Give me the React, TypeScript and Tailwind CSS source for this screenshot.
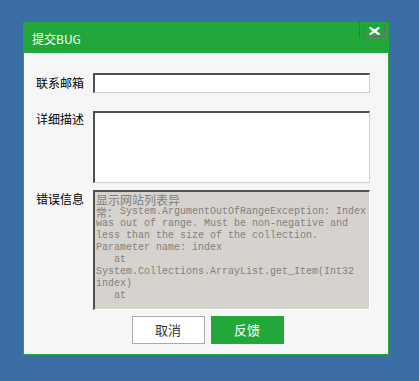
import React from "react";

const cjk = { fontFamily: '"Noto Sans CJK SC", "SimSun", sans-serif' };
const mono = { fontFamily: '"Liberation Mono", "Noto Sans CJK SC", monospace' };

export default function App() {
  const lines: string[] = [
    "System.ArgumentOutOfRangeException: Index",
    "was out of range. Must be non-negative and",
    "less than the size of the collection.",
    "Parameter name: index",
    "   at",
    "System.Collections.ArrayList.get_Item(Int32",
    "index)",
    "   at",
  ];
  return (
    <div className="w-[419px] h-[381px] bg-[#3a6ea5] pt-[22px] pl-[23px] overflow-hidden">
      <div className="w-[366px] h-[333px] flex flex-col">
        {/* Title bar */}
        <div className="h-[31px] bg-[#22a73b] flex items-start shrink-0">
          <div
            className="text-white text-[12px] leading-[14px] pl-[9px] pt-[10px] flex-1"
            style={cjk}
          >
            提交BUG
          </div>
          <div className="w-px h-[16px] bg-[#1b8d31] mr-[3px]" />
          <div className="mt-[3px] mr-[4px] w-[22px] h-[12px] border border-[#6b6b6b] flex items-center justify-center">
            <svg width="11" height="8" viewBox="0 0 11 8">
              <path
                d="M1.5 1 L9.5 7 M9.5 1 L1.5 7"
                stroke="#ffffff"
                strokeWidth="2.2"
                strokeLinecap="square"
              />
            </svg>
          </div>
        </div>
        {/* Body */}
        <div className="flex-1 bg-[#f6f6f6] border-x border-b border-[#22a73b] pl-[12px] pt-[20px] flex flex-col">
          <div className="flex items-center h-[20px]">
            <div className="w-[57px] text-[12px] text-black leading-[14px]" style={cjk}>
              联系邮箱
            </div>
            <div className="w-[277px] h-[20px] bg-white border-t-2 border-l-2 border-t-[#505050] border-l-[#505050] border-b border-r border-b-[#cfcfcf] border-r-[#cfcfcf]" />
          </div>
          <div className="flex items-start mt-[18px]">
            <div className="w-[57px] text-[12px] text-black leading-[14px] pt-[1px]" style={cjk}>
              详细描述
            </div>
            <div className="w-[277px] h-[72px] bg-white border-t-2 border-l-2 border-t-[#505050] border-l-[#505050] border-b border-r border-b-[#cfcfcf] border-r-[#cfcfcf]" />
          </div>
          <div className="flex items-start mt-[7px]">
            <div className="w-[57px] text-[12px] text-black leading-[14px] pt-[2px]" style={cjk}>
              错误信息
            </div>
            <div className="w-[277px] h-[120px] bg-[#d6d3ce] border-t-2 border-l-2 border-t-[#505050] border-l-[#505050] border-b border-r border-b-white border-r-white pl-[1px] pt-[1px] overflow-hidden text-[#808080]">
              <div className="h-[13px] leading-[13px] text-[12px]" style={cjk}>
                显示网站列表异
              </div>
              {lines.map((l, i) => (
                <div key={i} className="h-[12px] flex items-center">
                  {i === 0 ? (
                    <span className="w-[24px] text-[11px] leading-[12px] block" style={cjk}>
                      常：
                    </span>
                  ) : null}
                  <span
                    className="text-[10px] leading-[12px] whitespace-pre block"
                    style={mono}
                  >
                    {l}
                  </span>
                </div>
              ))}
            </div>
          </div>
          <div className="flex justify-center gap-[6px] mt-[6px] pr-[9px]">
            <div
              className="w-[73px] h-[28px] bg-white border border-[#ababab] flex items-center justify-center text-[13px] text-[#333333]"
              style={cjk}
            >
              取消
            </div>
            <div
              className="w-[73px] h-[28px] bg-[#22a73b] flex items-center justify-center text-[13px] text-white"
              style={cjk}
            >
              反馈
            </div>
          </div>
        </div>
      </div>
    </div>
  );
}
